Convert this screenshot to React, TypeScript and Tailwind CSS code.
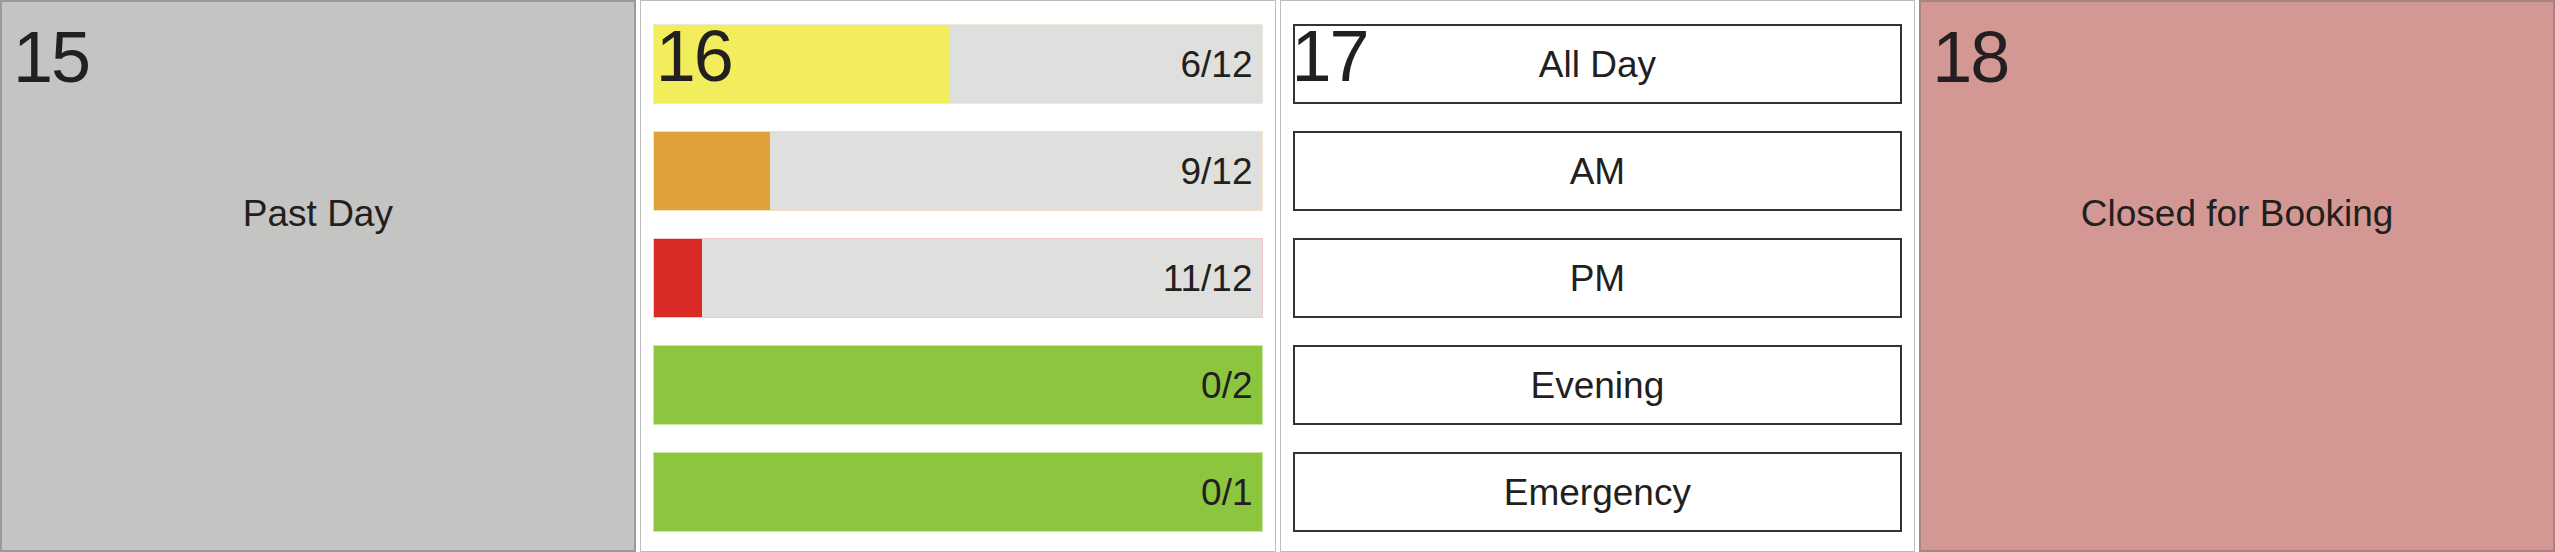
import React from "react";

type Slot = { label: string; fill: string; fillColor: string; borderColor: string };

const SLOTS: Slot[] = [
  { label: "6/12", fill: "48.5%", fillColor: "bg-[#f2ed5c]", borderColor: "border-[#ebe8dc]" },
  { label: "9/12", fill: "19.2%", fillColor: "bg-[#e0a13b]", borderColor: "border-[#f3e3c6]" },
  { label: "11/12", fill: "8%", fillColor: "bg-[#da2a26]", borderColor: "border-[#f2c9c8]" },
  { label: "0/2", fill: "100%", fillColor: "bg-[#8cc63f]", borderColor: "border-[#c9e6a4]" },
  { label: "0/1", fill: "100%", fillColor: "bg-[#8cc63f]", borderColor: "border-[#c9e6a4]" },
];

const OPTIONS = ["All Day", "AM", "PM", "Evening", "Emergency"];

function DayNumber({ n, className = "left-[11px]" }: { n: number; className?: string }) {
  return (
    <span
      className={`absolute top-[19px] text-[72px] leading-none tracking-[-2px] text-[#231f20] pointer-events-none z-10 ${className}`}
    >
      {n}
    </span>
  );
}

function LabelDay({ n, label, className }: { n: number; label: string; className: string }) {
  return (
    <div className={`relative h-full border-2 ${className}`}>
      <DayNumber n={n} />
      <div className="pt-[193px] text-center text-[37px] leading-none text-[#231f20]">{label}</div>
    </div>
  );
}

function CapacityDay({ n }: { n: number }) {
  return (
    <div className="relative h-full border border-[#bdbdbd] bg-white px-[12px] pt-[23px] flex flex-col gap-[27px]">
      <DayNumber n={n} className="left-[15px]" />
      {SLOTS.map((s) => (
        <div
          key={s.label + s.fill}
          className={`relative h-[80px] border bg-[#dfdfdd] ${s.borderColor} flex items-center justify-end pr-[9px]`}
        >
          <div className={`absolute left-0 top-0 bottom-0 ${s.fillColor}`} style={{ width: s.fill }} />
          <span className="relative text-[37px] leading-none text-[#231f20]">{s.label}</span>
        </div>
      ))}
    </div>
  );
}

function OptionsDay({ n }: { n: number }) {
  return (
    <div className="relative h-full border border-[#bdbdbd] bg-white px-[12px] pt-[23px] flex flex-col gap-[27px]">
      <DayNumber n={n} />
      {OPTIONS.map((o) => (
        <button
          key={o}
          type="button"
          className="h-[80px] border-2 border-[#333333] bg-white flex items-center justify-center text-[37px] leading-none text-[#231f20]"
        >
          {o}
        </button>
      ))}
    </div>
  );
}

export default function App() {
  return (
    <div
      className="w-[2555px] h-[552px] bg-white grid grid-cols-4 gap-[4px] overflow-hidden"
      style={{ fontFamily: '"Liberation Sans", Arial, sans-serif' }}
    >
      <LabelDay n={15} label="Past Day" className="bg-[#c4c4c2] border-[#9a9a9a]" />
      <CapacityDay n={16} />
      <OptionsDay n={17} />
      <LabelDay n={18} label="Closed for Booking" className="bg-[#d39894] border-[#a88583]" />
    </div>
  );
}
